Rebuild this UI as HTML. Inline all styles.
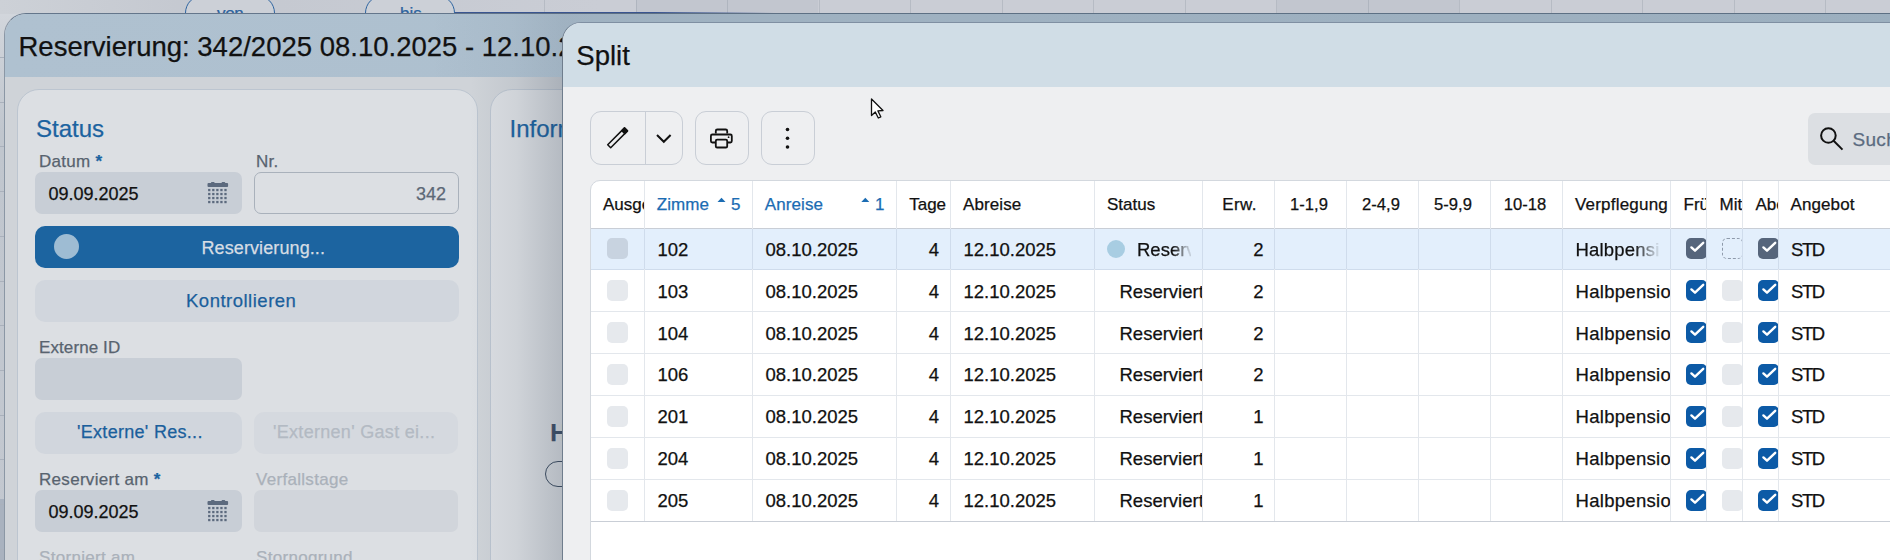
<!DOCTYPE html>
<html><head><meta charset="utf-8">
<style>
*{box-sizing:border-box;margin:0;padding:0}
html,body{width:1890px;height:560px;overflow:hidden;background:#c9cdd5;font-family:"Liberation Sans",sans-serif;position:relative}
.t{position:absolute;white-space:nowrap;line-height:normal;-webkit-text-stroke:0.25px currentColor}
.b{position:absolute}
svg{position:absolute;overflow:visible}
</style></head><body>
<div class="b" style="left:0px;top:0px;width:1890px;height:14px;background:linear-gradient(90deg,#cdd1d7,#c4c8d0 200px,#cacdd5 600px)"></div>
<div class="b" style="left:544.0px;top:0px;width:1.0px;height:14px;background:#b6bbc4"></div>
<div class="b" style="left:635.5px;top:0px;width:1.0px;height:14px;background:#b6bbc4"></div>
<div class="b" style="left:727.0px;top:0px;width:1.0px;height:14px;background:#b6bbc4"></div>
<div class="b" style="left:818.5px;top:0px;width:1.0px;height:14px;background:#b6bbc4"></div>
<div class="b" style="left:910.0px;top:0px;width:1.0px;height:14px;background:#b6bbc4"></div>
<div class="b" style="left:1001.5px;top:0px;width:1.0px;height:14px;background:#b6bbc4"></div>
<div class="b" style="left:1093.0px;top:0px;width:1.0px;height:14px;background:#b6bbc4"></div>
<div class="b" style="left:1184.5px;top:0px;width:1.0px;height:14px;background:#b6bbc4"></div>
<div class="b" style="left:1276.0px;top:0px;width:1.0px;height:14px;background:#b6bbc4"></div>
<div class="b" style="left:1367.5px;top:0px;width:1.0px;height:14px;background:#b6bbc4"></div>
<div class="b" style="left:1459.0px;top:0px;width:1.0px;height:14px;background:#b6bbc4"></div>
<div class="b" style="left:1550.5px;top:0px;width:1.0px;height:14px;background:#b6bbc4"></div>
<div class="b" style="left:1642.0px;top:0px;width:1.0px;height:14px;background:#b6bbc4"></div>
<div class="b" style="left:1733.5px;top:0px;width:1.0px;height:14px;background:#b6bbc4"></div>
<div class="b" style="left:1825.0px;top:0px;width:1.0px;height:14px;background:#b6bbc4"></div>
<div class="b" style="left:1916.5px;top:0px;width:1.0px;height:14px;background:#b6bbc4"></div>
<div class="b" style="left:636px;top:0px;width:182px;height:14px;background:rgba(60,70,90,0.05)"></div>
<div class="b" style="left:1277px;top:0px;width:182px;height:14px;background:rgba(60,70,90,0.05)"></div>
<div class="b" style="left:0px;top:14px;width:30px;height:546px;background:linear-gradient(#d2d6dc,#c0c6ce 120px,#c3c8d0)"></div>
<div class="b" style="left:0px;top:499px;width:5px;height:61px;background:#a9b2bf"></div>
<div class="b" style="left:0px;top:57.0px;width:5px;height:1.0px;background:#aab1bc"></div>
<div class="b" style="left:0px;top:101.7px;width:5px;height:1.0px;background:#aab1bc"></div>
<div class="b" style="left:0px;top:146.4px;width:5px;height:1.0px;background:#aab1bc"></div>
<div class="b" style="left:0px;top:191.10000000000002px;width:5px;height:1.0px;background:#aab1bc"></div>
<div class="b" style="left:0px;top:235.8px;width:5px;height:1.0px;background:#aab1bc"></div>
<div class="b" style="left:0px;top:280.5px;width:5px;height:1.0px;background:#aab1bc"></div>
<div class="b" style="left:0px;top:325.20000000000005px;width:5px;height:1.0px;background:#aab1bc"></div>
<div class="b" style="left:0px;top:369.90000000000003px;width:5px;height:1.0px;background:#aab1bc"></div>
<div class="b" style="left:0px;top:414.6px;width:5px;height:1.0px;background:#aab1bc"></div>
<div class="b" style="left:0px;top:459.3px;width:5px;height:1.0px;background:#aab1bc"></div>
<div class="b" style="left:0px;top:504.0px;width:5px;height:1.0px;background:#aab1bc"></div>
<div class="b" style="left:0px;top:548.7px;width:5px;height:1.0px;background:#aab1bc"></div>
<div class="b" style="left:185px;top:-5px;width:90px;height:36px;border:1.5px solid #2d64a0;border-radius:18px;background:#ccd0d7"></div>
<div class="b" style="left:365px;top:-5px;width:90px;height:36px;border:1.5px solid #2d64a0;border-radius:18px;background:#ccd0d7"></div>
<div class="t" style="left:217px;top:4.12px;font-size:17px;color:#2d64a0;letter-spacing:-0.3px;">von</div>
<div class="t" style="left:400px;top:4.12px;font-size:17px;color:#2d64a0;">bis</div>
<div class="b" style="left:455px;top:12px;width:1435px;height:2px;background:linear-gradient(90deg,#3a5590 0,#3a5590 200px,rgba(58,85,144,0) 320px)"></div>
<div class="b" style="left:4px;top:13px;width:1950px;height:600px;background:#cfd3d8;border-radius:22px 0 0 0;border-top:1.5px solid #64768b;border-left:1px solid #8b97a5;overflow:hidden"><div class="b" style="left:0;top:0;width:100%;height:63px;background:linear-gradient(90deg,#afc1d0,#aabdcc)"></div></div>
<div class="t" style="left:18.5px;top:31.11px;font-size:27.5px;color:#111;">Reservierung: 342/2025 08.10.2025 - 12.10.2025</div>
<div class="b" style="left:17px;top:89px;width:460.5px;height:511px;background:#dcdfe3;border:1px solid #bcc5d0;border-radius:22px"></div>
<div class="t" style="left:36px;top:115.28px;font-size:24px;color:#1b63a0;">Status</div>
<div class="t" style="left:39px;top:151.62px;font-size:17px;color:#58636f;letter-spacing:0.3px;">Datum <span style="color:#1b63a0;font-weight:700">*</span></div>
<div class="b" style="left:35px;top:172px;width:207px;height:41.5px;background:#c8ced6;border-radius:7px"></div>
<div class="t" style="left:48.5px;top:183.71px;font-size:18px;color:#111;">09.09.2025</div>
<svg style="left:207px;top:182px" width="24" height="24"><g fill="#5c6a7e"><rect x="0.5" y="1" width="20.6" height="4" rx="1"/><rect x="4" y="0" width="3.6" height="2" rx="0.8"/><rect x="14.6" y="0" width="3.6" height="2" rx="0.8"/><rect x="1.10" y="6.90" width="2.3" height="2.3"/><rect x="5.16" y="6.90" width="2.3" height="2.3"/><rect x="9.22" y="6.90" width="2.3" height="2.3"/><rect x="13.28" y="6.90" width="2.3" height="2.3"/><rect x="17.34" y="6.90" width="2.3" height="2.3"/><rect x="1.10" y="10.90" width="2.3" height="2.3"/><rect x="5.16" y="10.90" width="2.3" height="2.3"/><rect x="9.22" y="10.90" width="2.3" height="2.3"/><rect x="13.28" y="10.90" width="2.3" height="2.3"/><rect x="17.34" y="10.90" width="2.3" height="2.3"/><rect x="1.10" y="14.90" width="2.3" height="2.3"/><rect x="5.16" y="14.90" width="2.3" height="2.3"/><rect x="9.22" y="14.90" width="2.3" height="2.3"/><rect x="13.28" y="14.90" width="2.3" height="2.3"/><rect x="17.34" y="14.90" width="2.3" height="2.3"/><rect x="1.10" y="18.90" width="2.3" height="2.3"/><rect x="5.16" y="18.90" width="2.3" height="2.3"/><rect x="9.22" y="18.90" width="2.3" height="2.3"/><rect x="13.28" y="18.90" width="2.3" height="2.3"/><rect x="17.34" y="18.90" width="2.3" height="2.3"/></g></svg>
<div class="t" style="left:256px;top:151.62px;font-size:17px;color:#58636f;letter-spacing:0.3px;">Nr.</div>
<div class="b" style="left:253.5px;top:172px;width:205.0px;height:41.5px;border:1px solid #a9b1bb;border-radius:7px"></div>
<div class="t" style="left:300px;top:183.71px;font-size:18px;color:#5d6876;width:146px;text-align:right;">342</div>
<div class="b" style="left:35px;top:226px;width:424px;height:41.5px;background:#1c64a0;border-radius:10px"></div>
<div class="b" style="left:54px;top:234px;width:25px;height:25px;background:#9ebcd3;border-radius:50%"></div>
<div class="t" style="left:201.5px;top:238.11px;font-size:18px;color:#d6dde4;letter-spacing:0.1px;">Reservierung...</div>
<div class="b" style="left:35px;top:280px;width:424px;height:42px;background:#d1d6dd;border-radius:10px"></div>
<div class="t" style="left:186px;top:290.06px;font-size:18.5px;color:#1b5f9c;letter-spacing:0.5px;">Kontrollieren</div>
<div class="t" style="left:39px;top:338.01px;font-size:17px;color:#58636f;letter-spacing:0.1px;">Externe ID</div>
<div class="b" style="left:35px;top:358px;width:207px;height:42px;background:#c8ced6;border-radius:7px"></div>
<div class="b" style="left:35px;top:412px;width:207px;height:41.5px;background:#d1d6dd;border-radius:10px"></div>
<div class="t" style="left:77px;top:422.21px;font-size:18px;color:#1b5f9c;letter-spacing:0.3px;">'Externe' Res...</div>
<div class="b" style="left:253.5px;top:412px;width:204.5px;height:41.5px;background:#d5d9df;border-radius:10px"></div>
<div class="t" style="left:273px;top:422.21px;font-size:18px;color:#b3bac3;letter-spacing:0.3px;">'Externen' Gast ei...</div>
<div class="t" style="left:39px;top:470.01px;font-size:17px;color:#58636f;letter-spacing:0.3px;">Reserviert am <span style="color:#1b63a0;font-weight:700">*</span></div>
<div class="b" style="left:35px;top:490px;width:207px;height:41.5px;background:#c8ced6;border-radius:7px"></div>
<div class="t" style="left:48.5px;top:501.71px;font-size:18px;color:#111;">09.09.2025</div>
<svg style="left:207px;top:500px" width="24" height="24"><g fill="#5c6a7e"><rect x="0.5" y="1" width="20.6" height="4" rx="1"/><rect x="4" y="0" width="3.6" height="2" rx="0.8"/><rect x="14.6" y="0" width="3.6" height="2" rx="0.8"/><rect x="1.10" y="6.90" width="2.3" height="2.3"/><rect x="5.16" y="6.90" width="2.3" height="2.3"/><rect x="9.22" y="6.90" width="2.3" height="2.3"/><rect x="13.28" y="6.90" width="2.3" height="2.3"/><rect x="17.34" y="6.90" width="2.3" height="2.3"/><rect x="1.10" y="10.90" width="2.3" height="2.3"/><rect x="5.16" y="10.90" width="2.3" height="2.3"/><rect x="9.22" y="10.90" width="2.3" height="2.3"/><rect x="13.28" y="10.90" width="2.3" height="2.3"/><rect x="17.34" y="10.90" width="2.3" height="2.3"/><rect x="1.10" y="14.90" width="2.3" height="2.3"/><rect x="5.16" y="14.90" width="2.3" height="2.3"/><rect x="9.22" y="14.90" width="2.3" height="2.3"/><rect x="13.28" y="14.90" width="2.3" height="2.3"/><rect x="17.34" y="14.90" width="2.3" height="2.3"/><rect x="1.10" y="18.90" width="2.3" height="2.3"/><rect x="5.16" y="18.90" width="2.3" height="2.3"/><rect x="9.22" y="18.90" width="2.3" height="2.3"/><rect x="13.28" y="18.90" width="2.3" height="2.3"/><rect x="17.34" y="18.90" width="2.3" height="2.3"/></g></svg>
<div class="t" style="left:256px;top:470.01px;font-size:17px;color:#aab1ba;letter-spacing:0.3px;">Verfallstage</div>
<div class="b" style="left:253.5px;top:490px;width:204.5px;height:41.5px;background:#d1d5db;border-radius:7px"></div>
<div class="t" style="left:39px;top:547.62px;font-size:17px;color:#aab1ba;letter-spacing:0.3px;">Storniert am</div>
<div class="t" style="left:256px;top:547.62px;font-size:17px;color:#aab1ba;letter-spacing:0.3px;">Stornogrund</div>
<div class="b" style="left:489.5px;top:89px;width:710.5px;height:511px;background:#dcdfe3;border:1px solid #bcc5d0;border-radius:22px"></div>
<div class="t" style="left:509.5px;top:114.88px;font-size:24px;color:#1b63a0;">Information</div>
<div class="t" style="left:550.3px;top:419.28px;font-size:24px;color:#3e5068;font-weight:700;">H</div>
<div class="b" style="left:545px;top:461px;width:55px;height:26px;border:1.5px solid #3e4e62;border-radius:13px"></div>
<div class="b" style="left:430px;top:13px;width:160px;height:64px;background:linear-gradient(90deg,rgba(40,55,75,0) 0%,rgba(40,55,75,0.04) 52%,rgba(40,55,75,0.1) 83%,rgba(40,55,75,0.1) 100%)"></div>
<div class="b" style="left:470px;top:77px;width:93px;height:523px;background:linear-gradient(90deg,rgba(40,55,75,0) 0%,rgba(40,55,75,0.07) 50%,rgba(40,55,75,0.22) 100%)"></div>
<div class="b" style="left:590px;top:13px;width:1300px;height:9px;background:rgba(40,55,75,0.1)"></div>
<div class="b" style="left:562px;top:22px;width:1500px;height:600px;background:#eeeff1;border-radius:19px 0 0 0;border-top:1px solid #7f8fa2;border-left:1px solid #6f7d8d;overflow:hidden"><div class="b" style="left:0;top:0;width:100%;height:64px;background:#d0dde6"></div></div>
<div class="t" style="left:576.3px;top:40.01px;font-size:27.5px;color:#111;">Split</div>
<div class="b" style="left:590px;top:111px;width:92.5px;height:53.5px;border:1px solid #c9ced6;border-radius:11px"></div>
<div class="b" style="left:644.5px;top:111.5px;width:1.0px;height:52.5px;background:#c9ced6"></div>
<div class="b" style="left:695px;top:111px;width:54px;height:53.5px;border:1px solid #c9ced6;border-radius:11px"></div>
<div class="b" style="left:761px;top:111px;width:54px;height:53.5px;border:1px solid #c9ced6;border-radius:11px"></div>
<div class="b" style="left:1808px;top:113px;width:142px;height:51.5px;background:#dcdfe3;border-radius:7px"></div>
<svg style="left:0;top:0" width="1890" height="560"><g fill="none" stroke="#111" stroke-width="1.5" stroke-linejoin="round"><path d="M610.7 147.7 L607.7 144.7 L624.5 127.9 L627.5 130.9 Z"/></g><path d="M621.8 130.8 L624.5 127.9 L627.5 130.9 L624.8 133.7 Z" fill="#111" stroke="#111" stroke-width="1.4" stroke-linejoin="round"/><path d="M657 135 L663.8 141.8 L670.6 135" fill="none" stroke="#111" stroke-width="2"/><g fill="none" stroke="#111" stroke-width="1.8" stroke-linejoin="round"><path d="M715.8 133.5 V131 Q715.8 129.5 717.3 129.5 H725.7 Q727.2 129.5 727.2 131 V133.5"/><path d="M715.5 142.5 H712.3 Q710.9 142.5 710.9 141.1 V136 Q710.9 134.5 712.4 134.5 H730.4 Q731.8 134.5 731.8 136 V141.1 Q731.8 142.5 730.4 142.5 H727.5"/><rect x="715.8" y="139.7" width="11.4" height="7.8" rx="1.3"/></g><circle cx="728.6" cy="137.2" r="0.9" fill="#111"/><circle cx="787.5" cy="129.5" r="1.8" fill="#111"/><circle cx="787.5" cy="138.3" r="1.8" fill="#111"/><circle cx="787.5" cy="147" r="1.8" fill="#111"/><circle cx="1828.4" cy="135.5" r="7.3" fill="none" stroke="#111" stroke-width="2"/><path d="M1833.6 140.8 L1842.5 149.6" stroke="#111" stroke-width="2"/><path d="M871.5 99 L871.5 115.5 L875.3 112 L878.3 118 L880.8 116.8 L877.9 110.9 L883 110.5 Z" fill="#fff" stroke="#111" stroke-width="1.3" stroke-linejoin="round"/></svg>
<div class="t" style="left:1852.5px;top:129.00px;font-size:19px;color:#5b6b80;letter-spacing:0.3px;">Suchen</div>
<div class="b" style="left:590px;top:180px;width:1360px;height:420px;background:#fff;border:1px solid #d3d8de;border-radius:10px 0 0 0"></div>
<div class="b" style="left:591px;top:228.5px;width:1299px;height:41.375px;background:#e3effc"></div>
<div class="b" style="left:591px;top:227.5px;width:1299px;height:1.0px;background:#c9ced6"></div>
<div class="b" style="left:591px;top:269.375px;width:1299px;height:1.0px;background:#cfdcec"></div>
<div class="b" style="left:591px;top:311.25px;width:1299px;height:1.0px;background:#e3e7ec"></div>
<div class="b" style="left:591px;top:353.125px;width:1299px;height:1.0px;background:#e3e7ec"></div>
<div class="b" style="left:591px;top:395.0px;width:1299px;height:1.0px;background:#e3e7ec"></div>
<div class="b" style="left:591px;top:436.875px;width:1299px;height:1.0px;background:#e3e7ec"></div>
<div class="b" style="left:591px;top:478.75px;width:1299px;height:1.0px;background:#e3e7ec"></div>
<div class="b" style="left:591px;top:520.625px;width:1299px;height:1.0px;background:#c9ced6"></div>
<div class="b" style="left:644.0px;top:181px;width:1.0px;height:339.625px;background:#e3e7ec"></div>
<div class="b" style="left:644.0px;top:228.5px;width:1.0px;height:40.875px;background:#cfdcec"></div>
<div class="b" style="left:752.0px;top:181px;width:1.0px;height:339.625px;background:#e3e7ec"></div>
<div class="b" style="left:752.0px;top:228.5px;width:1.0px;height:40.875px;background:#cfdcec"></div>
<div class="b" style="left:896.0px;top:181px;width:1.0px;height:339.625px;background:#e3e7ec"></div>
<div class="b" style="left:896.0px;top:228.5px;width:1.0px;height:40.875px;background:#cfdcec"></div>
<div class="b" style="left:950.0px;top:181px;width:1.0px;height:339.625px;background:#e3e7ec"></div>
<div class="b" style="left:950.0px;top:228.5px;width:1.0px;height:40.875px;background:#cfdcec"></div>
<div class="b" style="left:1094.0px;top:181px;width:1.0px;height:339.625px;background:#e3e7ec"></div>
<div class="b" style="left:1094.0px;top:228.5px;width:1.0px;height:40.875px;background:#cfdcec"></div>
<div class="b" style="left:1202.0px;top:181px;width:1.0px;height:339.625px;background:#e3e7ec"></div>
<div class="b" style="left:1202.0px;top:228.5px;width:1.0px;height:40.875px;background:#cfdcec"></div>
<div class="b" style="left:1274.0px;top:181px;width:1.0px;height:339.625px;background:#e3e7ec"></div>
<div class="b" style="left:1274.0px;top:228.5px;width:1.0px;height:40.875px;background:#cfdcec"></div>
<div class="b" style="left:1346.0px;top:181px;width:1.0px;height:339.625px;background:#e3e7ec"></div>
<div class="b" style="left:1346.0px;top:228.5px;width:1.0px;height:40.875px;background:#cfdcec"></div>
<div class="b" style="left:1418.0px;top:181px;width:1.0px;height:339.625px;background:#e3e7ec"></div>
<div class="b" style="left:1418.0px;top:228.5px;width:1.0px;height:40.875px;background:#cfdcec"></div>
<div class="b" style="left:1490.0px;top:181px;width:1.0px;height:339.625px;background:#e3e7ec"></div>
<div class="b" style="left:1490.0px;top:228.5px;width:1.0px;height:40.875px;background:#cfdcec"></div>
<div class="b" style="left:1562.0px;top:181px;width:1.0px;height:339.625px;background:#e3e7ec"></div>
<div class="b" style="left:1562.0px;top:228.5px;width:1.0px;height:40.875px;background:#cfdcec"></div>
<div class="b" style="left:1670.0px;top:181px;width:1.0px;height:339.625px;background:#e3e7ec"></div>
<div class="b" style="left:1670.0px;top:228.5px;width:1.0px;height:40.875px;background:#cfdcec"></div>
<div class="b" style="left:1706.0px;top:181px;width:1.0px;height:339.625px;background:#e3e7ec"></div>
<div class="b" style="left:1706.0px;top:228.5px;width:1.0px;height:40.875px;background:#cfdcec"></div>
<div class="b" style="left:1742.0px;top:181px;width:1.0px;height:339.625px;background:#e3e7ec"></div>
<div class="b" style="left:1742.0px;top:228.5px;width:1.0px;height:40.875px;background:#cfdcec"></div>
<div class="b" style="left:1778.0px;top:181px;width:1.0px;height:339.625px;background:#e3e7ec"></div>
<div class="b" style="left:1778.0px;top:228.5px;width:1.0px;height:40.875px;background:#cfdcec"></div>
<div class="b" style="left:591.0px;top:180px;width:53.0px;height:40px;overflow:hidden"><div class="t" style="left:0px;top:14.62px;font-size:17px;color:#111;width:53.0px;text-align:left;padding:0 12px;">Ausgeben</div>
</div>
<div class="t" style="left:656.7px;top:194.62px;font-size:17px;color:#1b6cb3;letter-spacing:0.1px;">Zimme</div>
<svg style="left:0;top:0" width="1890" height="560"><path d="M717.5 202 L721.5 197.8 L725.5 202 Z" fill="#1b6cb3"/><path d="M861.3 202 L865.3 197.8 L869.3 202 Z" fill="#1b6cb3"/></svg>
<div class="t" style="left:731px;top:194.62px;font-size:17px;color:#1b6cb3;">5</div>
<div class="t" style="left:764.8px;top:194.62px;font-size:17px;color:#1b6cb3;letter-spacing:0.1px;">Anreise</div>
<div class="t" style="left:875px;top:194.62px;font-size:17px;color:#1b6cb3;">1</div>
<div class="t" style="left:909.2px;top:194.62px;font-size:17px;color:#111;">Tage</div>
<div class="t" style="left:963px;top:194.62px;font-size:17px;color:#111;letter-spacing:0.1px;">Abreise</div>
<div class="t" style="left:1107px;top:194.62px;font-size:17px;color:#111;">Status</div>
<div class="t" style="left:1203.5px;top:194.62px;font-size:17px;color:#111;letter-spacing:0.4px;width:72px;text-align:center;">Erw.</div>
<div class="t" style="left:1273.0px;top:194.98px;font-size:16.6px;color:#111;width:72px;text-align:center;">1-1,9</div>
<div class="t" style="left:1345.0px;top:194.98px;font-size:16.6px;color:#111;width:72px;text-align:center;">2-4,9</div>
<div class="t" style="left:1417.0px;top:194.98px;font-size:16.6px;color:#111;width:72px;text-align:center;">5-9,9</div>
<div class="t" style="left:1489.0px;top:194.98px;font-size:16.6px;color:#111;width:72px;text-align:center;">10-18</div>
<div class="b" style="left:1563.0px;top:180px;width:107.0px;height:40px;overflow:hidden"><div class="t" style="left:0px;top:14.62px;font-size:17px;color:#111;letter-spacing:0.2px;width:107.0px;text-align:left;padding:0 12px;">Verpflegung</div>
</div>
<div class="b" style="left:1671.0px;top:180px;width:35.0px;height:40px;overflow:hidden"><div class="t" style="left:0px;top:14.62px;font-size:17px;color:#111;width:35.0px;text-align:left;padding:0 12.5px;">Frühstück</div>
</div>
<div class="b" style="left:1707.0px;top:180px;width:35.0px;height:40px;overflow:hidden"><div class="t" style="left:0px;top:14.62px;font-size:17px;color:#111;width:35.0px;text-align:left;padding:0 12.5px;">Mittagessen</div>
</div>
<div class="b" style="left:1743.0px;top:180px;width:35.0px;height:40px;overflow:hidden"><div class="t" style="left:0px;top:14.62px;font-size:17px;color:#111;width:35.0px;text-align:left;padding:0 12.5px;">Abendessen</div>
</div>
<div class="t" style="left:1790.5px;top:194.62px;font-size:17px;color:#111;letter-spacing:0.1px;">Angebot</div>
<div class="b" style="left:607px;top:238.4375px;width:21px;height:21.0px;background:#c8d3e0;border-radius:5px"></div>
<div class="t" style="left:657.5px;top:238.79px;font-size:18.5px;color:#111;">102</div>
<div class="t" style="left:765.5px;top:238.79px;font-size:18.5px;color:#111;">08.10.2025</div>
<div class="t" style="left:896.5px;top:238.79px;font-size:18.5px;color:#111;width:54px;text-align:right;padding-right:11.5px;">4</div>
<div class="t" style="left:963.5px;top:238.79px;font-size:18.5px;color:#111;">12.10.2025</div>
<div class="b" style="left:1107px;top:239.9375px;width:18px;height:18.0px;background:#a8cde2;border-radius:50%"></div>
<div class="b" style="left:1137px;top:228.0px;width:54px;height:40px;overflow:hidden"><div class="t" style="left:0px;top:10.79px;font-size:18.5px;color:#111;-webkit-mask-image:linear-gradient(90deg,#000 0,#000 36px,rgba(0,0,0,0.15) 52px);">Reserviert</div>
</div>
<div class="t" style="left:1202.5px;top:238.79px;font-size:18.5px;color:#111;width:72px;text-align:right;padding-right:11px;">2</div>
<div class="b" style="left:1575.5px;top:228.0px;width:84px;height:40px;overflow:hidden"><div class="t" style="left:0px;top:10.79px;font-size:18.5px;color:#111;letter-spacing:0.2px;-webkit-mask-image:linear-gradient(90deg,#000 0,#000 58px,rgba(0,0,0,0.1) 82px);">Halbpension</div>
</div>
<div class="b" style="left:1686px;top:238.4375px;width:20.0px;height:21px;overflow:hidden"><svg style="left:0;top:0" width="21" height="21"><rect x="0" y="0" width="21" height="21" rx="5" fill="#56657b"/><path d="M5.4 9.4 L9 12.7 L17.2 4.8" fill="none" stroke="#fff" stroke-width="2.4" stroke-linecap="round" stroke-linejoin="round"/></svg></div>
<div class="b" style="left:1722px;top:238.4375px;width:20.0px;height:21px;overflow:hidden"><div class="b" style="left:0;top:0;width:21px;height:21px;border:1px dashed #8e9aab;border-radius:5px"></div></div>
<div class="b" style="left:1758px;top:238.4375px;width:20.0px;height:21px;overflow:hidden"><svg style="left:0;top:0" width="21" height="21"><rect x="0" y="0" width="21" height="21" rx="5" fill="#56657b"/><path d="M5.4 9.4 L9 12.7 L17.2 4.8" fill="none" stroke="#fff" stroke-width="2.4" stroke-linecap="round" stroke-linejoin="round"/></svg></div>
<div class="t" style="left:1791px;top:238.79px;font-size:18.5px;color:#111;letter-spacing:-1.4px;">STD</div>
<div class="b" style="left:607px;top:280.3125px;width:21px;height:21.0px;background:#e6e9ed;border-radius:5px"></div>
<div class="t" style="left:657.5px;top:280.67px;font-size:18.5px;color:#111;">103</div>
<div class="t" style="left:765.5px;top:280.67px;font-size:18.5px;color:#111;">08.10.2025</div>
<div class="t" style="left:896.5px;top:280.67px;font-size:18.5px;color:#111;width:54px;text-align:right;padding-right:11.5px;">4</div>
<div class="t" style="left:963.5px;top:280.67px;font-size:18.5px;color:#111;">12.10.2025</div>
<div class="b" style="left:1119.5px;top:269.875px;width:82.5px;height:40px;overflow:hidden"><div class="t" style="left:0px;top:10.80px;font-size:18.5px;color:#111;">Reserviert</div>
</div>
<div class="t" style="left:1202.5px;top:280.67px;font-size:18.5px;color:#111;width:72px;text-align:right;padding-right:11px;">2</div>
<div class="b" style="left:1575.5px;top:269.875px;width:94.5px;height:40px;overflow:hidden"><div class="t" style="left:0px;top:10.80px;font-size:18.5px;color:#111;letter-spacing:0.3px;">Halbpension</div>
</div>
<div class="b" style="left:1686px;top:280.3125px;width:20.0px;height:21px;overflow:hidden"><svg style="left:0;top:0" width="21" height="21"><rect x="0" y="0" width="21" height="21" rx="5" fill="#0c5aa6"/><path d="M5.4 9.4 L9 12.7 L17.2 4.8" fill="none" stroke="#fff" stroke-width="2.4" stroke-linecap="round" stroke-linejoin="round"/></svg></div>
<div class="b" style="left:1722px;top:280.3125px;width:20.0px;height:21px;overflow:hidden"><div class="b" style="left:0;top:0;width:21px;height:21px;background:#e6e9ed;border-radius:5px"></div></div>
<div class="b" style="left:1758px;top:280.3125px;width:20.0px;height:21px;overflow:hidden"><svg style="left:0;top:0" width="21" height="21"><rect x="0" y="0" width="21" height="21" rx="5" fill="#0c5aa6"/><path d="M5.4 9.4 L9 12.7 L17.2 4.8" fill="none" stroke="#fff" stroke-width="2.4" stroke-linecap="round" stroke-linejoin="round"/></svg></div>
<div class="t" style="left:1791px;top:280.67px;font-size:18.5px;color:#111;letter-spacing:-1.4px;">STD</div>
<div class="b" style="left:607px;top:322.1875px;width:21px;height:21.0px;background:#e6e9ed;border-radius:5px"></div>
<div class="t" style="left:657.5px;top:322.55px;font-size:18.5px;color:#111;">104</div>
<div class="t" style="left:765.5px;top:322.55px;font-size:18.5px;color:#111;">08.10.2025</div>
<div class="t" style="left:896.5px;top:322.55px;font-size:18.5px;color:#111;width:54px;text-align:right;padding-right:11.5px;">4</div>
<div class="t" style="left:963.5px;top:322.55px;font-size:18.5px;color:#111;">12.10.2025</div>
<div class="b" style="left:1119.5px;top:311.75px;width:82.5px;height:40px;overflow:hidden"><div class="t" style="left:0px;top:10.80px;font-size:18.5px;color:#111;">Reserviert</div>
</div>
<div class="t" style="left:1202.5px;top:322.55px;font-size:18.5px;color:#111;width:72px;text-align:right;padding-right:11px;">2</div>
<div class="b" style="left:1575.5px;top:311.75px;width:94.5px;height:40px;overflow:hidden"><div class="t" style="left:0px;top:10.80px;font-size:18.5px;color:#111;letter-spacing:0.3px;">Halbpension</div>
</div>
<div class="b" style="left:1686px;top:322.1875px;width:20.0px;height:21px;overflow:hidden"><svg style="left:0;top:0" width="21" height="21"><rect x="0" y="0" width="21" height="21" rx="5" fill="#0c5aa6"/><path d="M5.4 9.4 L9 12.7 L17.2 4.8" fill="none" stroke="#fff" stroke-width="2.4" stroke-linecap="round" stroke-linejoin="round"/></svg></div>
<div class="b" style="left:1722px;top:322.1875px;width:20.0px;height:21px;overflow:hidden"><div class="b" style="left:0;top:0;width:21px;height:21px;background:#e6e9ed;border-radius:5px"></div></div>
<div class="b" style="left:1758px;top:322.1875px;width:20.0px;height:21px;overflow:hidden"><svg style="left:0;top:0" width="21" height="21"><rect x="0" y="0" width="21" height="21" rx="5" fill="#0c5aa6"/><path d="M5.4 9.4 L9 12.7 L17.2 4.8" fill="none" stroke="#fff" stroke-width="2.4" stroke-linecap="round" stroke-linejoin="round"/></svg></div>
<div class="t" style="left:1791px;top:322.55px;font-size:18.5px;color:#111;letter-spacing:-1.4px;">STD</div>
<div class="b" style="left:607px;top:364.0625px;width:21px;height:21.0px;background:#e6e9ed;border-radius:5px"></div>
<div class="t" style="left:657.5px;top:364.42px;font-size:18.5px;color:#111;">106</div>
<div class="t" style="left:765.5px;top:364.42px;font-size:18.5px;color:#111;">08.10.2025</div>
<div class="t" style="left:896.5px;top:364.42px;font-size:18.5px;color:#111;width:54px;text-align:right;padding-right:11.5px;">4</div>
<div class="t" style="left:963.5px;top:364.42px;font-size:18.5px;color:#111;">12.10.2025</div>
<div class="b" style="left:1119.5px;top:353.625px;width:82.5px;height:40px;overflow:hidden"><div class="t" style="left:0px;top:10.80px;font-size:18.5px;color:#111;">Reserviert</div>
</div>
<div class="t" style="left:1202.5px;top:364.42px;font-size:18.5px;color:#111;width:72px;text-align:right;padding-right:11px;">2</div>
<div class="b" style="left:1575.5px;top:353.625px;width:94.5px;height:40px;overflow:hidden"><div class="t" style="left:0px;top:10.80px;font-size:18.5px;color:#111;letter-spacing:0.3px;">Halbpension</div>
</div>
<div class="b" style="left:1686px;top:364.0625px;width:20.0px;height:21px;overflow:hidden"><svg style="left:0;top:0" width="21" height="21"><rect x="0" y="0" width="21" height="21" rx="5" fill="#0c5aa6"/><path d="M5.4 9.4 L9 12.7 L17.2 4.8" fill="none" stroke="#fff" stroke-width="2.4" stroke-linecap="round" stroke-linejoin="round"/></svg></div>
<div class="b" style="left:1722px;top:364.0625px;width:20.0px;height:21px;overflow:hidden"><div class="b" style="left:0;top:0;width:21px;height:21px;background:#e6e9ed;border-radius:5px"></div></div>
<div class="b" style="left:1758px;top:364.0625px;width:20.0px;height:21px;overflow:hidden"><svg style="left:0;top:0" width="21" height="21"><rect x="0" y="0" width="21" height="21" rx="5" fill="#0c5aa6"/><path d="M5.4 9.4 L9 12.7 L17.2 4.8" fill="none" stroke="#fff" stroke-width="2.4" stroke-linecap="round" stroke-linejoin="round"/></svg></div>
<div class="t" style="left:1791px;top:364.42px;font-size:18.5px;color:#111;letter-spacing:-1.4px;">STD</div>
<div class="b" style="left:607px;top:405.9375px;width:21px;height:21.0px;background:#e6e9ed;border-radius:5px"></div>
<div class="t" style="left:657.5px;top:406.30px;font-size:18.5px;color:#111;">201</div>
<div class="t" style="left:765.5px;top:406.30px;font-size:18.5px;color:#111;">08.10.2025</div>
<div class="t" style="left:896.5px;top:406.30px;font-size:18.5px;color:#111;width:54px;text-align:right;padding-right:11.5px;">4</div>
<div class="t" style="left:963.5px;top:406.30px;font-size:18.5px;color:#111;">12.10.2025</div>
<div class="b" style="left:1119.5px;top:395.5px;width:82.5px;height:40px;overflow:hidden"><div class="t" style="left:0px;top:10.80px;font-size:18.5px;color:#111;">Reserviert</div>
</div>
<div class="t" style="left:1202.5px;top:406.30px;font-size:18.5px;color:#111;width:72px;text-align:right;padding-right:11px;">1</div>
<div class="b" style="left:1575.5px;top:395.5px;width:94.5px;height:40px;overflow:hidden"><div class="t" style="left:0px;top:10.80px;font-size:18.5px;color:#111;letter-spacing:0.3px;">Halbpension</div>
</div>
<div class="b" style="left:1686px;top:405.9375px;width:20.0px;height:21px;overflow:hidden"><svg style="left:0;top:0" width="21" height="21"><rect x="0" y="0" width="21" height="21" rx="5" fill="#0c5aa6"/><path d="M5.4 9.4 L9 12.7 L17.2 4.8" fill="none" stroke="#fff" stroke-width="2.4" stroke-linecap="round" stroke-linejoin="round"/></svg></div>
<div class="b" style="left:1722px;top:405.9375px;width:20.0px;height:21px;overflow:hidden"><div class="b" style="left:0;top:0;width:21px;height:21px;background:#e6e9ed;border-radius:5px"></div></div>
<div class="b" style="left:1758px;top:405.9375px;width:20.0px;height:21px;overflow:hidden"><svg style="left:0;top:0" width="21" height="21"><rect x="0" y="0" width="21" height="21" rx="5" fill="#0c5aa6"/><path d="M5.4 9.4 L9 12.7 L17.2 4.8" fill="none" stroke="#fff" stroke-width="2.4" stroke-linecap="round" stroke-linejoin="round"/></svg></div>
<div class="t" style="left:1791px;top:406.30px;font-size:18.5px;color:#111;letter-spacing:-1.4px;">STD</div>
<div class="b" style="left:607px;top:447.8125px;width:21px;height:21.0px;background:#e6e9ed;border-radius:5px"></div>
<div class="t" style="left:657.5px;top:448.17px;font-size:18.5px;color:#111;">204</div>
<div class="t" style="left:765.5px;top:448.17px;font-size:18.5px;color:#111;">08.10.2025</div>
<div class="t" style="left:896.5px;top:448.17px;font-size:18.5px;color:#111;width:54px;text-align:right;padding-right:11.5px;">4</div>
<div class="t" style="left:963.5px;top:448.17px;font-size:18.5px;color:#111;">12.10.2025</div>
<div class="b" style="left:1119.5px;top:437.375px;width:82.5px;height:40px;overflow:hidden"><div class="t" style="left:0px;top:10.80px;font-size:18.5px;color:#111;">Reserviert</div>
</div>
<div class="t" style="left:1202.5px;top:448.17px;font-size:18.5px;color:#111;width:72px;text-align:right;padding-right:11px;">1</div>
<div class="b" style="left:1575.5px;top:437.375px;width:94.5px;height:40px;overflow:hidden"><div class="t" style="left:0px;top:10.80px;font-size:18.5px;color:#111;letter-spacing:0.3px;">Halbpension</div>
</div>
<div class="b" style="left:1686px;top:447.8125px;width:20.0px;height:21px;overflow:hidden"><svg style="left:0;top:0" width="21" height="21"><rect x="0" y="0" width="21" height="21" rx="5" fill="#0c5aa6"/><path d="M5.4 9.4 L9 12.7 L17.2 4.8" fill="none" stroke="#fff" stroke-width="2.4" stroke-linecap="round" stroke-linejoin="round"/></svg></div>
<div class="b" style="left:1722px;top:447.8125px;width:20.0px;height:21px;overflow:hidden"><div class="b" style="left:0;top:0;width:21px;height:21px;background:#e6e9ed;border-radius:5px"></div></div>
<div class="b" style="left:1758px;top:447.8125px;width:20.0px;height:21px;overflow:hidden"><svg style="left:0;top:0" width="21" height="21"><rect x="0" y="0" width="21" height="21" rx="5" fill="#0c5aa6"/><path d="M5.4 9.4 L9 12.7 L17.2 4.8" fill="none" stroke="#fff" stroke-width="2.4" stroke-linecap="round" stroke-linejoin="round"/></svg></div>
<div class="t" style="left:1791px;top:448.17px;font-size:18.5px;color:#111;letter-spacing:-1.4px;">STD</div>
<div class="b" style="left:607px;top:489.6875px;width:21px;height:21.0px;background:#e6e9ed;border-radius:5px"></div>
<div class="t" style="left:657.5px;top:490.05px;font-size:18.5px;color:#111;">205</div>
<div class="t" style="left:765.5px;top:490.05px;font-size:18.5px;color:#111;">08.10.2025</div>
<div class="t" style="left:896.5px;top:490.05px;font-size:18.5px;color:#111;width:54px;text-align:right;padding-right:11.5px;">4</div>
<div class="t" style="left:963.5px;top:490.05px;font-size:18.5px;color:#111;">12.10.2025</div>
<div class="b" style="left:1119.5px;top:479.25px;width:82.5px;height:40px;overflow:hidden"><div class="t" style="left:0px;top:10.80px;font-size:18.5px;color:#111;">Reserviert</div>
</div>
<div class="t" style="left:1202.5px;top:490.05px;font-size:18.5px;color:#111;width:72px;text-align:right;padding-right:11px;">1</div>
<div class="b" style="left:1575.5px;top:479.25px;width:94.5px;height:40px;overflow:hidden"><div class="t" style="left:0px;top:10.80px;font-size:18.5px;color:#111;letter-spacing:0.3px;">Halbpension</div>
</div>
<div class="b" style="left:1686px;top:489.6875px;width:20.0px;height:21px;overflow:hidden"><svg style="left:0;top:0" width="21" height="21"><rect x="0" y="0" width="21" height="21" rx="5" fill="#0c5aa6"/><path d="M5.4 9.4 L9 12.7 L17.2 4.8" fill="none" stroke="#fff" stroke-width="2.4" stroke-linecap="round" stroke-linejoin="round"/></svg></div>
<div class="b" style="left:1722px;top:489.6875px;width:20.0px;height:21px;overflow:hidden"><div class="b" style="left:0;top:0;width:21px;height:21px;background:#e6e9ed;border-radius:5px"></div></div>
<div class="b" style="left:1758px;top:489.6875px;width:20.0px;height:21px;overflow:hidden"><svg style="left:0;top:0" width="21" height="21"><rect x="0" y="0" width="21" height="21" rx="5" fill="#0c5aa6"/><path d="M5.4 9.4 L9 12.7 L17.2 4.8" fill="none" stroke="#fff" stroke-width="2.4" stroke-linecap="round" stroke-linejoin="round"/></svg></div>
<div class="t" style="left:1791px;top:490.05px;font-size:18.5px;color:#111;letter-spacing:-1.4px;">STD</div>
</body></html>
